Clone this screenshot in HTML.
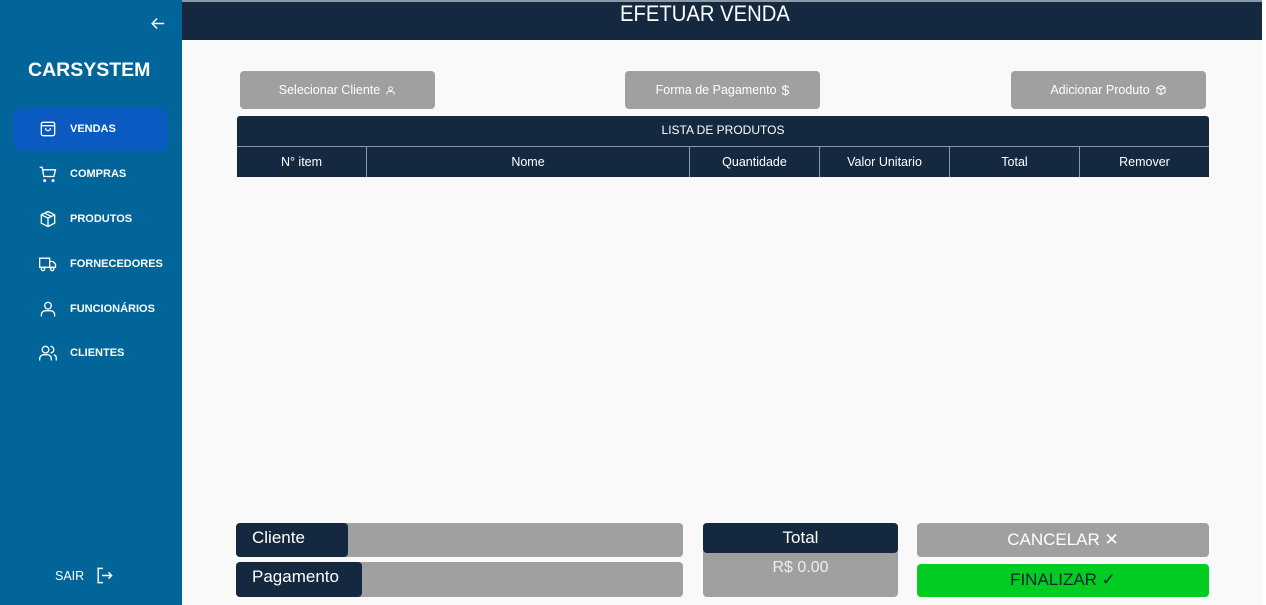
<!DOCTYPE html>
<html><head><meta charset="utf-8"><style>
*{margin:0;padding:0;box-sizing:border-box}
body{width:1266px;height:605px;overflow:hidden;background:#f9f9f9;font-family:"Liberation Sans",sans-serif;position:relative}
.a{position:absolute}
#sb{left:0;top:0;width:182px;height:605px;background:#02659a}
.it{position:absolute;left:70px;font-size:11px;font-weight:bold;color:#fff;transform:translateY(-50%)}
.ic{position:absolute;left:38px;width:20px;height:20px;transform:translateY(-50%)}
.btn{position:absolute;top:71px;height:38px;width:195px;background:#a0a0a0;border-radius:4px;color:#fff;font-size:12.5px;display:flex;align-items:center;justify-content:center;gap:5px}
.th{position:absolute;top:147px;height:30px;color:#fff;font-size:12.5px;display:flex;align-items:center;justify-content:center;border-left:1px solid #8a96a5}
.dk{background:#14293f;color:#fff}
</style></head><body>
<div class="a" style="left:0;top:0;width:1266px;height:2px;background:#8c9aa8"></div>
<div id="sb" class="a"></div>
<svg class="a" style="left:150px;top:15px" width="17" height="17" viewBox="0 0 24 24" fill="none" stroke="#fff" stroke-width="2"><path d="M20 12H4M10 5l-7 7 7 7"/></svg>
<div class="a" style="left:28px;top:59px;font-size:19.5px;font-weight:bold;color:#fff">CARSYSTEM</div>
<div class="a" style="left:13px;top:108px;width:155px;height:43px;background:#0a5ac2;border-radius:10px"></div>
<svg class="ic" style="top:129px" viewBox="0 0 24 24" fill="none" stroke="#fff" stroke-width="1.6"><rect x="4" y="4" width="16" height="16" rx="2"/><path d="M4 8h16M9 11a3 3 0 0 0 6 0"/></svg>
<div class="it" style="top:129px">VENDAS</div>
<svg class="ic" style="top:174px" viewBox="0 0 24 24" fill="none" stroke="#fff" stroke-width="1.6"><path d="M2 4h3l2 11h12l2-8H6"/><circle cx="8" cy="20" r="1"/><circle cx="18" cy="20" r="1"/></svg>
<div class="it" style="top:174px">COMPRAS</div>
<svg class="ic" style="top:219px" viewBox="0 0 24 24" fill="none" stroke="#fff" stroke-width="1.6"><path d="M12 3l8 4v10l-8 4-8-4V7zM4 7l8 4 8-4M12 11v10M8 5l8 4"/></svg>
<div class="it" style="top:219px">PRODUTOS</div>
<svg class="ic" style="top:264px" viewBox="0 0 24 24" fill="none" stroke="#fff" stroke-width="1.6"><path d="M2 5h12v11H2zM14 9h4l3 3v4h-7"/><circle cx="6" cy="18" r="2"/><circle cx="17" cy="18" r="2"/></svg>
<div class="it" style="top:264px">FORNECEDORES</div>
<svg class="ic" style="top:309px" viewBox="0 0 24 24" fill="none" stroke="#fff" stroke-width="1.6"><circle cx="12" cy="8" r="4"/><path d="M4 21v-2a5 5 0 0 1 5-5h6a5 5 0 0 1 5 5v2"/></svg>
<div class="it" style="top:309px">FUNCIONÁRIOS</div>
<svg class="ic" style="top:353px" viewBox="0 0 24 24" fill="none" stroke="#fff" stroke-width="1.6"><circle cx="9" cy="8" r="4"/><path d="M2 21v-2a5 5 0 0 1 5-5h4a5 5 0 0 1 5 5v2M15 4a4 4 0 0 1 0 8M19 14a5 5 0 0 1 3 5v2"/></svg>
<div class="it" style="top:353px">CLIENTES</div>
<div class="a" style="left:55px;top:569px;font-size:12.5px;color:#fff">SAIR</div>
<svg class="a" style="left:95px;top:566px" width="19" height="19" viewBox="0 0 24 24" fill="none" stroke="#fff" stroke-width="1.8"><path d="M10 3H4v18h6M9 12h12M17 8l4 4-4 4"/></svg>

<div class="a dk" style="left:182px;top:2px;width:1080px;height:38px"></div>
<div class="a" style="left:620px;top:1px;font-size:22px;color:#fff;transform:scaleX(.92);transform-origin:left">EFETUAR VENDA</div>
<div class="a" style="left:1262px;top:0;width:4px;height:605px;background:#fff"></div>

<div class="btn" style="left:240px">Selecionar Cliente <svg width="11" height="11" viewBox="0 0 24 24" fill="none" stroke="#fff" stroke-width="2"><circle cx="12" cy="8" r="4"/><path d="M4 21v-2a5 5 0 0 1 5-5h6a5 5 0 0 1 5 5v2"/></svg></div>
<div class="btn" style="left:625px">Forma de Pagamento <span style="font-size:14px">$</span></div>
<div class="btn" style="left:1011px">Adicionar Produto <svg width="12" height="12" viewBox="0 0 24 24" fill="none" stroke="#fff" stroke-width="2"><path d="M12 3l8 4v10l-8 4-8-4V7zM4 7l8 4 8-4M12 11v10"/></svg></div>

<div class="a dk" style="left:237px;top:116px;width:972px;height:61px;border-radius:3px 3px 0 0"></div>
<div class="a" style="left:237px;top:146px;width:972px;height:1px;background:#8a96a5"></div>
<div class="a" style="left:237px;top:123px;width:972px;text-align:center;color:#fff;font-size:12px">LISTA DE PRODUTOS</div>
<div class="th" style="left:237px;width:129px;border:none">N° item</div>
<div class="th" style="left:366px;width:323px">Nome</div>
<div class="th" style="left:689px;width:130px">Quantidade</div>
<div class="th" style="left:819px;width:130px">Valor Unitario</div>
<div class="th" style="left:949px;width:130px">Total</div>
<div class="th" style="left:1079px;width:130px">Remover</div>

<div class="a" style="left:236px;top:523px;width:447px;height:34px;background:#a0a0a0;border-radius:4px"></div>
<div class="a dk" style="left:236px;top:523px;width:112px;height:34px;border-radius:4px;font-size:17px;padding:5px 16px">Cliente</div>
<div class="a" style="left:236px;top:562px;width:447px;height:35px;background:#a0a0a0;border-radius:4px"></div>
<div class="a dk" style="left:236px;top:562px;width:126px;height:35px;border-radius:4px;font-size:17px;padding:5px 16px">Pagamento</div>
<div class="a" style="left:703px;top:523px;width:195px;height:74px;background:#a0a0a0;border-radius:4px;color:#eee;font-size:16px;text-align:center;padding-top:36px">R$ 0.00</div>
<div class="a dk" style="left:703px;top:523px;width:195px;height:30px;border-radius:4px;font-size:17px;text-align:center;padding-top:5px">Total</div>
<div class="a" style="left:917px;top:523px;width:292px;height:34px;background:#a0a0a0;border-radius:4px;color:#fff;font-size:17px;text-align:center;padding-top:7px">CANCELAR ✕</div>
<div class="a" style="left:917px;top:564px;width:292px;height:33px;background:#00cc22;border-radius:4px;color:#123;font-size:17px;text-align:center;padding-top:6px">FINALIZAR ✓</div>
</body></html>
